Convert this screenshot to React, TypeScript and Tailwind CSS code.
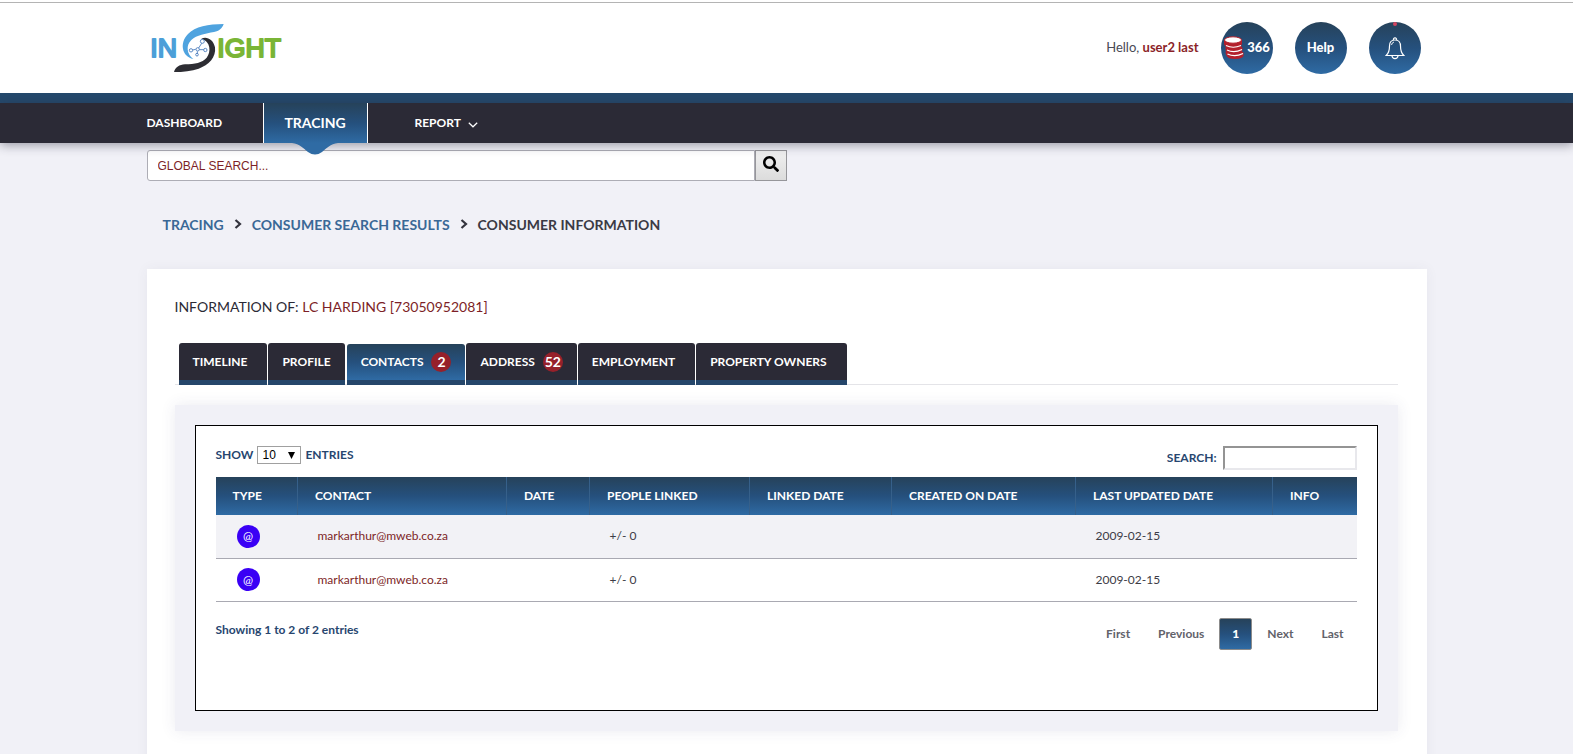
import React from "react";
import { FaSearch } from "react-icons/fa";

const blueGradient = "bg-linear-to-b from-[#26425a] via-[#25507d] to-[#2f6ba4]";

function Logo() {
  return (
    <svg viewBox="30 33 411 165" className="h-[55px] w-[137px]" role="img" aria-label="Insight">
      <g
        fontFamily="Liberation Sans, Arial, sans-serif"
        fontWeight="400"
        fontSize="80"
        strokeWidth="6"
        strokeLinejoin="round"
      >
        <text x="31" y="140" fill="#4c9fd8" stroke="#4c9fd8">IN</text>
        <text x="232" y="140" fill="#7ab536" stroke="#7ab536">IGHT</text>
      </g>
      <path
        d="M251 42 C205 42 165 50 144 72 C118 98 125 140 160 147 C140 132 137 106 154 90 C170 75 197 71 222 66 C238 63 246 56 251 42Z"
        fill="#4fa3df"
      />
      <path
        d="M184 86 C200 78 220 88 225 112 C229 142 206 166 176 176 C155 183 130 186 102 186 C106 172 118 164 135 163 C165 162 186 159 200 143 C214 125 212 94 184 86Z"
        fill="#2d2d33"
      />
      <g fill="none" stroke="#3f74b8" strokeWidth="2.5">
        <path d="M158 120 L167 118 M176 114 L185 100 M178 119 L191 119 M172 124 L172 130" />
        <circle cx="153" cy="121" r="5" />
        <circle cx="173" cy="118" r="5" />
        <circle cx="187" cy="94" r="6" />
        <circle cx="196" cy="120" r="5" />
        <circle cx="171" cy="134" r="4" />
      </g>
    </svg>
  );
}

function CoinsIcon() {
  return (
    <svg viewBox="0 0 22 24" className="h-6 w-[22px]" aria-hidden="true">
      <path
        d="M1 4 V8 Q1 9.500 2.500 10 V13 Q2.500 14.500 3 15 Q2 16 3 18.500 Q4 23 12 23 Q19 23 20.500 20 V16.500 L19 15.500 Q20.500 13 19 11 L18 10 Q19.500 8 19 4Z"
        fill="#b3202c"
      />
      <ellipse cx="10" cy="4" rx="8.500" ry="3.200" fill="#ffffff" stroke="#b3202c" strokeWidth="1" />
      <path
        d="M3 9.500 Q10 13 18 9.500 M4 14 Q11 17.500 19 13.500 M4.500 18 Q12 21.500 20 17.500"
        fill="none"
        stroke="#ffffff"
        strokeWidth="1.200"
      />
    </svg>
  );
}

function BellIcon() {
  return (
    <svg viewBox="0 0 20 23" className="h-[23px] w-5" fill="none" stroke="#ffffff" strokeWidth="1.200" aria-hidden="true">
      <path d="M8.500 3 A1.600 1.600 0 1 1 11.500 3" />
      <path d="M10 3 C6 3 4.500 6 4.500 9 C4.500 14 4 16 1.200 18.500 H18.800 C16 16 15.500 14 15.500 9 C15.500 6 14 3 10 3Z" />
      <path d="M7 19 C7.500 22.500 12.500 22.500 13 19" />
      <path d="M6.500 8 Q6.800 5.500 9 5" strokeWidth="0.900" />
    </svg>
  );
}

const circle = "flex h-[52px] w-[52px] items-center justify-center rounded-full text-[13px] font-black text-white";

function Header() {
  return (
    <header className="border-b-10 border-[#25496c] bg-white pt-[2px]">
      <div className="border-t border-[#b4b4b4]">
        <div className="mx-auto flex h-[90px] max-w-[1280px] items-center justify-between pr-[6px] pl-[3px]">
          <a href="#home">
            <Logo />
          </a>
          <div className="flex items-center gap-[22px]">
            <p className="text-[13px] text-[#4a4a55]">
              Hello, <b className="font-bold text-[#8b1f28]">user2 last</b>
            </p>
            <button type="button" className={`${circle} ${blueGradient}`}>
              <CoinsIcon />
              <span className="pl-[2px]">366</span>
            </button>
            <button type="button" className={`${circle} ${blueGradient}`}>Help</button>
            <button type="button" aria-label="Notifications" className={`relative ${circle} ${blueGradient}`}>
              <BellIcon />
              <span className="absolute top-0 left-6 h-1 w-1 rounded-full bg-[#d4455f]" />
            </button>
          </div>
        </div>
      </div>
    </header>
  );
}

function Nav() {
  return (
    <nav className="relative z-10 bg-[#2b2a36] text-xs font-bold text-white shadow-[0_2px_10px_rgba(40,40,60,0.45)]">
      <div className="mx-auto flex h-10 max-w-[1280px] items-stretch">
        <a href="#dashboard" className="flex w-[116px] items-center">DASHBOARD</a>
        <a
          href="#tracing"
          className={`relative flex w-[105px] items-center justify-center border-x border-white text-sm ${blueGradient}`}
        >
          TRACING
          <svg viewBox="0 0 46 12" className="absolute top-10 left-7 h-3 w-[46px]" aria-hidden="true">
            <path d="M0 0 H46 C38 1 35 5 30 9 Q23 14 16 9 C11 5 8 1 0 0Z" fill="#2f6ba4" />
          </svg>
        </a>
        <a href="#report" className="flex items-center gap-[7px] pl-[47px]">
          REPORT
          <svg viewBox="0 0 10 6" className="mt-1 h-[6px] w-[10px]" fill="none" stroke="#ffffff" strokeWidth="1.200" aria-hidden="true">
            <path d="M0.800 0.800 L5 4.800 L9.200 0.800" />
          </svg>
        </a>
      </div>
    </nav>
  );
}

function Separator() {
  return (
    <svg viewBox="0 0 8 10" className="mb-[3px] h-[10px] w-2" fill="none" stroke="#33333d" strokeWidth="2.200" aria-hidden="true">
      <path d="M1.500 1 L6 5 L1.500 9" />
    </svg>
  );
}

const tabs = [
  { label: "TIMELINE", wide: true },
  { label: "PROFILE" },
  { label: "CONTACTS", count: 2, active: true },
  { label: "ADDRESS", count: 52 },
  { label: "EMPLOYMENT", wide: true },
  { label: "PROPERTY OWNERS", wide: true },
];

function Tabs() {
  return (
    <div role="tablist" className="flex items-end border-b border-[#e4e4e8] pl-1">
      <div className="-mb-px flex items-end gap-px">
        {tabs.map((t) => (
          <button
            key={t.label}
            type="button"
            role="tab"
            aria-selected={!!t.active}
            className={`flex items-center gap-2 rounded-t-[3px] border-b-5 border-[#25466a] pl-[14px] text-xs font-bold text-white ${
              t.wide ? "pr-5" : "pr-[14px]"
            } ${t.active ? `ml-px h-[41px] ${blueGradient}` : "h-[42px] bg-[#2b2a36]"}`}
          >
            {t.label}
            {t.count !== undefined && (
              <span className="flex h-5 w-5 items-center justify-center rounded-full bg-[#96202a] text-sm">{t.count}</span>
            )}
          </button>
        ))}
      </div>
    </div>
  );
}

const columns = [
  { label: "TYPE", width: "w-[82px]" },
  { label: "CONTACT", width: "w-[209px]" },
  { label: "DATE", width: "w-[83px]" },
  { label: "PEOPLE LINKED", width: "w-[160px]" },
  { label: "LINKED DATE", width: "w-[142px]" },
  { label: "CREATED ON DATE", width: "w-[184px]" },
  { label: "LAST UPDATED DATE", width: "w-[197px]" },
  { label: "INFO", width: "w-[84px]" },
];

const rows = [
  { id: 1, contact: "markarthur@mweb.co.za", linked: "+/- 0", updated: "2009-02-15" },
  { id: 2, contact: "markarthur@mweb.co.za", linked: "+/- 0", updated: "2009-02-15" },
];

function ContactsTable() {
  return (
    <table className="w-full table-fixed border-collapse text-left text-xs text-[#3c3c46]">
      <thead>
        <tr className={`h-[38px] text-white ${blueGradient}`}>
          {columns.map((c) => (
            <th
              key={c.label}
              scope="col"
              className={`${c.width} border-r border-[#36608a] pl-[17px] font-bold whitespace-nowrap last:border-r-0`}
            >
              {c.label}
            </th>
          ))}
        </tr>
      </thead>
      <tbody>
        {rows.map((r) => (
          <tr key={r.id} className="h-[43px] border-b border-[#a9a9b2] odd:bg-[#f2f2f6]">
            <td className="pl-[21px]">
              <span className="flex h-[23px] w-[23px] items-center justify-center rounded-full bg-[#3a00f5] text-xs text-white">@</span>
            </td>
            <td className="pl-5">
              <a href="#contact" className="text-[#7d1f27]">{r.contact}</a>
            </td>
            <td />
            <td className="pl-5">{r.linked}</td>
            <td />
            <td />
            <td className="pl-5">{r.updated}</td>
            <td />
          </tr>
        ))}
      </tbody>
    </table>
  );
}

export default function App() {
  return (
    <div className="min-h-screen bg-[#f1f1f7] font-[Lato,'Open_Sans',sans-serif]">
      <Header />
      <Nav />
      <main className="mx-auto max-w-[1280px]">
        <form className="flex h-[38px] w-1/2 pt-[7px]" onSubmit={(e) => e.preventDefault()}>
          <input
            aria-label="Global search"
            placeholder="GLOBAL SEARCH..."
            className="min-w-0 flex-1 rounded-l-[3px] border border-[#adadb5] bg-white px-[10px] font-['Liberation_Sans',Arial,sans-serif] text-xs placeholder:text-[#7d1f27]"
          />
          <button
            type="submit"
            aria-label="Search"
            className="flex w-8 items-center justify-center border border-[#96969a] bg-linear-to-b from-[#f0f0f0] to-[#dcdcdc] pb-1 text-black"
          >
            <FaSearch size={16} />
          </button>
        </form>
        <nav aria-label="Breadcrumb" className="flex h-[88px] items-center gap-[10px] pl-4 text-sm font-bold text-[#3a6896]">
          <a href="#tracing">TRACING</a>
          <Separator />
          <a href="#results">CONSUMER SEARCH RESULTS</a>
          <Separator />
          <span className="text-[#3a3a44]">CONSUMER INFORMATION</span>
        </nav>
        <section className="bg-white pt-7 pr-[29px] pb-12 pl-7 shadow-[0_0_12px_rgba(60,60,80,0.06)]">
          <h1 className="text-sm leading-5 text-[#2b2a36]">
            INFORMATION OF: <span className="text-[#7d1f27]">LC HARDING [73050952081]</span>
          </h1>
          <div className="pt-[26px]">
            <Tabs />
          </div>
          <div className="mt-5 bg-[#f1f1f7] p-5 shadow-[0_0_14px_rgba(60,60,110,0.10)]">
            <div className="min-h-[286px] border border-black bg-white px-5 pt-5">
              <div className="flex items-start justify-between pb-[7px] text-xs font-bold text-[#27466f]">
                <label className="flex items-center gap-1">
                  SHOW
                  <span className="relative">
                    <select
                      defaultValue="10"
                      className="block h-[18px] w-11 appearance-none border border-[#a0a0a0] bg-white pl-1 font-['Liberation_Sans',Arial,sans-serif] text-xs leading-4 font-normal text-black"
                    >
                      <option>10</option>
                      <option>25</option>
                      <option>50</option>
                    </select>
                    <svg viewBox="0 0 7 7" className="pointer-events-none absolute top-[6px] right-[6px] h-[7px] w-[7px]" aria-hidden="true">
                      <path d="M0 0 H7 L3.500 7Z" fill="#000000" />
                    </svg>
                  </span>
                  ENTRIES
                </label>
                <label className="flex items-center gap-[6px]">
                  SEARCH:
                  <input
                    type="search"
                    className="h-6 w-[134px] border-2 border-t-[#949494] border-r-[#e8e8ec] border-b-[#e8e8ec] border-l-[#949494] bg-white px-1 font-normal"
                  />
                </label>
              </div>
              <ContactsTable />
              <div className="flex items-start justify-between pt-4 text-xs font-bold">
                <p className="pt-[2px] leading-5 text-[#27466f]">Showing 1 to 2 of 2 entries</p>
                <div className="flex items-center text-[#62626a]">
                  <button type="button" className="px-[14px]">First</button>
                  <button type="button" className="px-[14px]">Previous</button>
                  <button
                    type="button"
                    aria-current="page"
                    className={`mx-px h-8 w-[33px] rounded-[2px] border border-[#8b8b8b] font-black text-white ${blueGradient}`}
                  >
                    1
                  </button>
                  <button type="button" className="px-[14px]">Next</button>
                  <button type="button" className="pr-[13px] pl-[14px]">Last</button>
                </div>
              </div>
            </div>
          </div>
        </section>
      </main>
    </div>
  );
}
